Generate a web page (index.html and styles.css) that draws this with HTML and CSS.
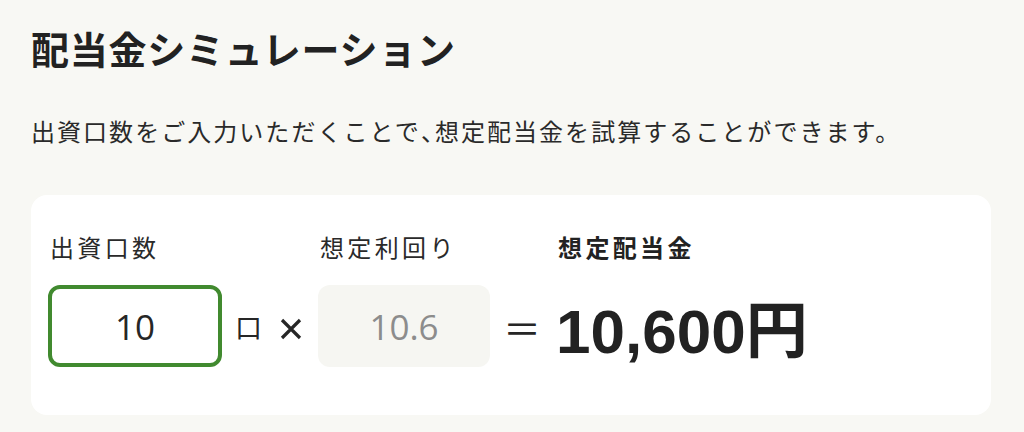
FILE: index.html
```html
<!DOCTYPE html>
<html lang="ja">
<head>
<meta charset="utf-8">
<title>配当金シミュレーション</title>
<link rel="stylesheet" href="styles.css">
</head>
<body>
<main class="page">
  <h1 class="title">配当金シミュレーション</h1>
  <p class="lead">出資口数をご入力いただくことで<span class="punct">、</span>想定配当金を試算することができます。</p>
  <section class="card">
    <div class="calc">
      <div class="field">
        <label class="label" for="units">出資口数</label>
        <input id="units" class="box box-input" type="text" value="10">
      </div>
      <div class="op op-unit">口</div>
      <div class="op op-times">
        <svg width="22" height="22" viewBox="0 0 22 22" aria-hidden="true"><path d="M2 2 L20 20 M20 2 L2 20" stroke="#262626" stroke-width="3.2" stroke-linecap="butt" fill="none"/></svg>
      </div>
      <div class="field">
        <label class="label" for="rate">想定利回り</label>
        <input id="rate" class="box box-disabled" type="text" value="10.6" disabled>
      </div>
      <div class="op op-eq">＝</div>
      <div class="field field-result">
        <div class="label label-bold">想定配当金</div>
        <div class="result">10,600円</div>
      </div>
    </div>
  </section>
</main>
</body>
</html>
```

FILE: styles.css
```css
html, body {
  margin: 0;
  padding: 0;
  background: #f8f8f4;
}
body {
  font-family: "Noto Sans CJK JP", "Noto Sans", sans-serif;
  color: #262626;
}
.page {
  padding: 20px 33px 0 31px;
}
.title {
  margin: 0;
  font-size: 38px;
  line-height: 56px;
  font-weight: 700;
  letter-spacing: 0.02em;
  color: #222;
}
.lead {
  margin: 37px 0 0;
  font-size: 24px;
  line-height: 36px;
  letter-spacing: 0.085em;
  color: #2a2a2a;
}
.punct {
  letter-spacing: -10px;
}
.card {
  margin-top: 46px;
  background: #fff;
  border-radius: 16px;
  padding: 34px 18px 48px 17px;
}
.calc {
  display: flex;
  align-items: flex-end;
}
.field {
  display: flex;
  flex-direction: column;
}
.label {
  display: block;
  font-size: 24px;
  line-height: 36px;
  letter-spacing: 0.14em;
  margin: 0 0 20px 2px;
  color: #2a2a2a;
}
.label-bold {
  font-weight: 700;
  margin-left: 1px;
  color: #222;
}
.box {
  box-sizing: border-box;
  width: 174px;
  height: 82px;
  border-radius: 12px;
  font-family: "Open Sans", "Noto Sans", sans-serif;
  font-size: 35px;
  text-align: center;
  padding: 0;
  margin: 0;
  outline: none;
}
.box-input {
  border: 4px solid #418a2f;
  background: #fff;
  color: #262626;
}
.box-disabled {
  width: 172px;
  border: none;
  background: #f6f6f2;
  color: #8c8c8c;
  -webkit-text-fill-color: #8c8c8c;
  opacity: 1;
}
.op {
  height: 82px;
  display: flex;
  align-items: center;
  justify-content: center;
  color: #262626;
}
.op-unit {
  font-size: 27px;
  margin-left: 13px;
}
.op-times {
  margin-left: 18px;
  margin-right: 16px;
  padding-top: 6px;
  box-sizing: border-box;
}
.op-eq {
  font-size: 38px;
  margin-left: 13px;
  margin-right: 16px;
}
.result {
  height: 82px;
  display: flex;
  align-items: center;
  font-family: "Liberation Sans", "Noto Sans CJK JP", sans-serif;
  font-weight: 700;
  font-size: 62px;
  margin-left: -1px;
  color: #222;
  white-space: nowrap;
}
```
